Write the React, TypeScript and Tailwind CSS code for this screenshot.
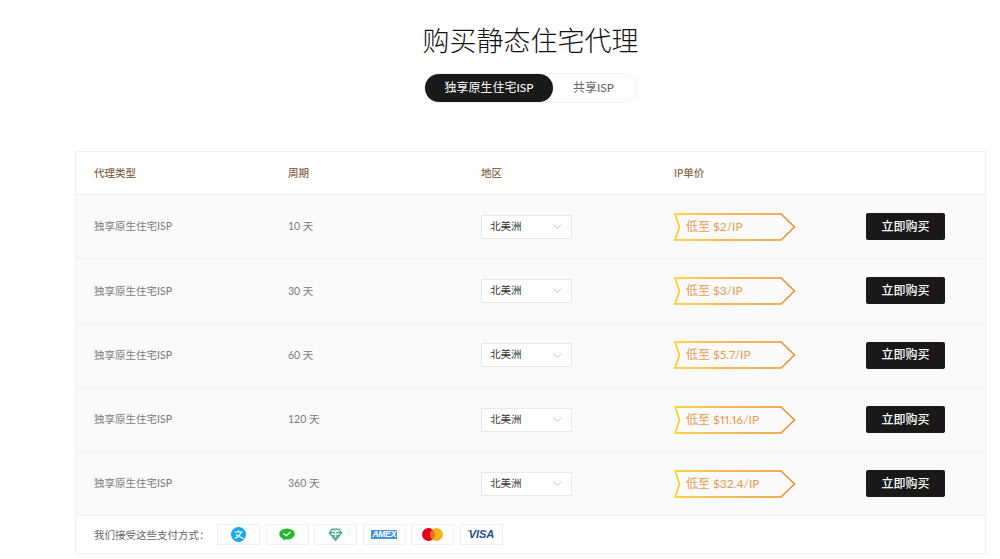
const FONT = "font-['Lato','Noto_Sans_CJK_SC',sans-serif]";

const rows = [
  { days: "10 天", price: "低至 $2/IP" },
  { days: "30 天", price: "低至 $3/IP" },
  { days: "60 天", price: "低至 $5.7/IP" },
  { days: "120 天", price: "低至 $11.16/IP" },
  { days: "360 天", price: "低至 $32.4/IP" },
];

function PriceTag({ label, id }: { label: string; id: string }) {
  return (
    <div className="relative flex h-[28px] w-[122px] items-center pl-[12px] text-[12px] font-normal text-[#e99a50] proportional-nums">
      <svg className="absolute inset-0" width="122" height="28" viewBox="0 0 122 28" fill="none">
        <defs>
          <linearGradient id={id} x1="0" y1="0" x2="1" y2="0">
            <stop offset="0" stopColor="#ffc814" />
            <stop offset="0.4" stopColor="#f5a623" />
            <stop offset="1" stopColor="#ea8c2c" />
          </linearGradient>
        </defs>
        <path d="M1 1H107L120.500 14L107 27H1L5.500 14Z" stroke={`url(#${id})`} strokeWidth="1.500" />
      </svg>
      <span className="relative">{label}</span>
    </div>
  );
}

function Row({ days, price, id }: { days: string; price: string; id: string }) {
  return (
    <div className="grid h-[64.300px] grid-cols-[194px_193px_193px_192px_1fr] items-center border-b border-[#f0f0f0] bg-[#fafafa] pl-[18px] text-[10.500px] text-[#7a7a7a]">
      <div className="pt-px">独享原生住宅ISP</div>
      <div className="pt-px">{days}</div>
      <div className="flex h-[24px] w-[91px] items-center justify-between border border-[#e6e8ec] bg-white pl-[8px] pr-[9px] text-[#333333]">
        北美洲
        <svg width="9" height="5" viewBox="0 0 9 5" fill="none">
          <path d="M.5.500 4.500 4.500 8.500.500" stroke="#b8b8b8" strokeWidth=".8" />
        </svg>
      </div>
      <PriceTag label={price} id={id} />
      <button
        type="button"
        className="flex h-[27px] w-[79px] items-center justify-center rounded-[2px] bg-[#191919] text-[12px] font-medium text-white"
      >
        立即购买
      </button>
    </div>
  );
}

function PayCard({ children }: { children: React.ReactNode }) {
  return (
    <div className="flex h-[21px] w-[43px] items-center justify-center border border-[#f0f0f0] bg-white">
      {children}
    </div>
  );
}

export default function App() {
  return (
    <div className={`${FONT} h-[559px] overflow-hidden bg-white pl-[75px] pr-[14px]`}>
      <div className="flex flex-col items-center pt-[22px]">
        <h1 className="text-[27px] font-light leading-[38px] text-[#111111]">购买静态住宅代理</h1>
        <div className="mt-[13px] mb-[1px] flex h-[30px] w-[213px] rounded-full border border-[#f0f0f0] bg-white text-[12px]">
          <div className="flex h-full w-[128px] items-center justify-center rounded-full bg-[#191919] text-white">
            独享原生住宅ISP
          </div>
          <div className="flex flex-1 items-center justify-center pr-[2px] text-[#666666]">共享ISP</div>
        </div>
      </div>

      <div className="mt-[47px] border border-[#f0f0f0] bg-white">
        <div className="grid h-[43px] grid-cols-[194px_193px_193px_192px_1fr] items-center border-b border-[#ececec] pl-[18px] pt-px text-[10.500px] font-medium text-[#86694a]">
          <div>代理类型</div>
          <div>周期</div>
          <div>地区</div>
          <div>IP单价</div>
        </div>
        {rows.map((r, i) => (
          <Row key={r.days} days={r.days} price={r.price} id={`tag-${i}`} />
        ))}
        <div className="flex h-[37px] items-center pl-[18px]">
          <span className="mr-[7.500px] pt-px text-[10.500px] text-[#666666]">我们接受这些支付方式：</span>
          <div className="flex gap-[5.600px]">
            <PayCard>
              <svg width="15" height="15" viewBox="0 0 15 15">
                <circle cx="7.500" cy="7.500" r="7.500" fill="#18a8f0" />
                <path d="M3.500 5H11.500M7.500 3V5M10 5C9 8.500 6.500 10.500 3.500 11.500M5 7.500C7 9 9.500 10.500 13 11.800" stroke="#fff" strokeWidth="1.200" fill="none" />
              </svg>
            </PayCard>
            <PayCard>
              <svg width="16" height="13" viewBox="0 0 16 13">
                <ellipse cx="8" cy="6" rx="7.800" ry="5.600" fill="#22b82c" />
                <path d="M4 12.500L5 9L8 10.500Z" fill="#22b82c" />
                <path d="M4.500 5.500L7.200 7.800L11.500 4" stroke="#fff" strokeWidth="1.500" fill="none" />
              </svg>
            </PayCard>
            <PayCard>
              <svg width="15" height="14" viewBox="0 0 15 14">
                <path d="M3.500.500H11.500L14.500 5L7.500 13.500L.500 5Z" fill="#53ae94" />
                <path d="M3.500 3H11.500M7.500 3V9.500M3.500 5.600C5.500 6.700 9.500 6.700 11.500 5.600" stroke="#fff" strokeWidth="1.300" fill="none" />
              </svg>
            </PayCard>
            <PayCard>
              <span className="bg-[#4a94dc] px-[1px] font-['Liberation_Sans',sans-serif] text-[8.500px] leading-[9px] font-bold italic tracking-[-0.2px] text-white">
                AMEX
              </span>
            </PayCard>
            <PayCard>
              <svg width="21" height="13" viewBox="0 0 21 13">
                <circle cx="6.500" cy="6.500" r="6.500" fill="#e2001a" />
                <circle cx="14.500" cy="6.500" r="6.500" fill="#f9b31a" />
                <path d="M10.500 1.400A6.500 6.500 0 0 1 10.500 11.600A6.500 6.500 0 0 1 10.500 1.400Z" fill="#f16a1c" />
              </svg>
            </PayCard>
            <PayCard>
              <span className="relative font-['Liberation_Sans',sans-serif] text-[11px] leading-none font-bold italic text-[#1a4f8f]">
                <span className="absolute -left-[1px] top-[1px] h-[2px] w-[3px] bg-[#f2a93b]" />
                <span className="relative">VISA</span>
              </span>
            </PayCard>
          </div>
        </div>
      </div>
    </div>
  );
}
